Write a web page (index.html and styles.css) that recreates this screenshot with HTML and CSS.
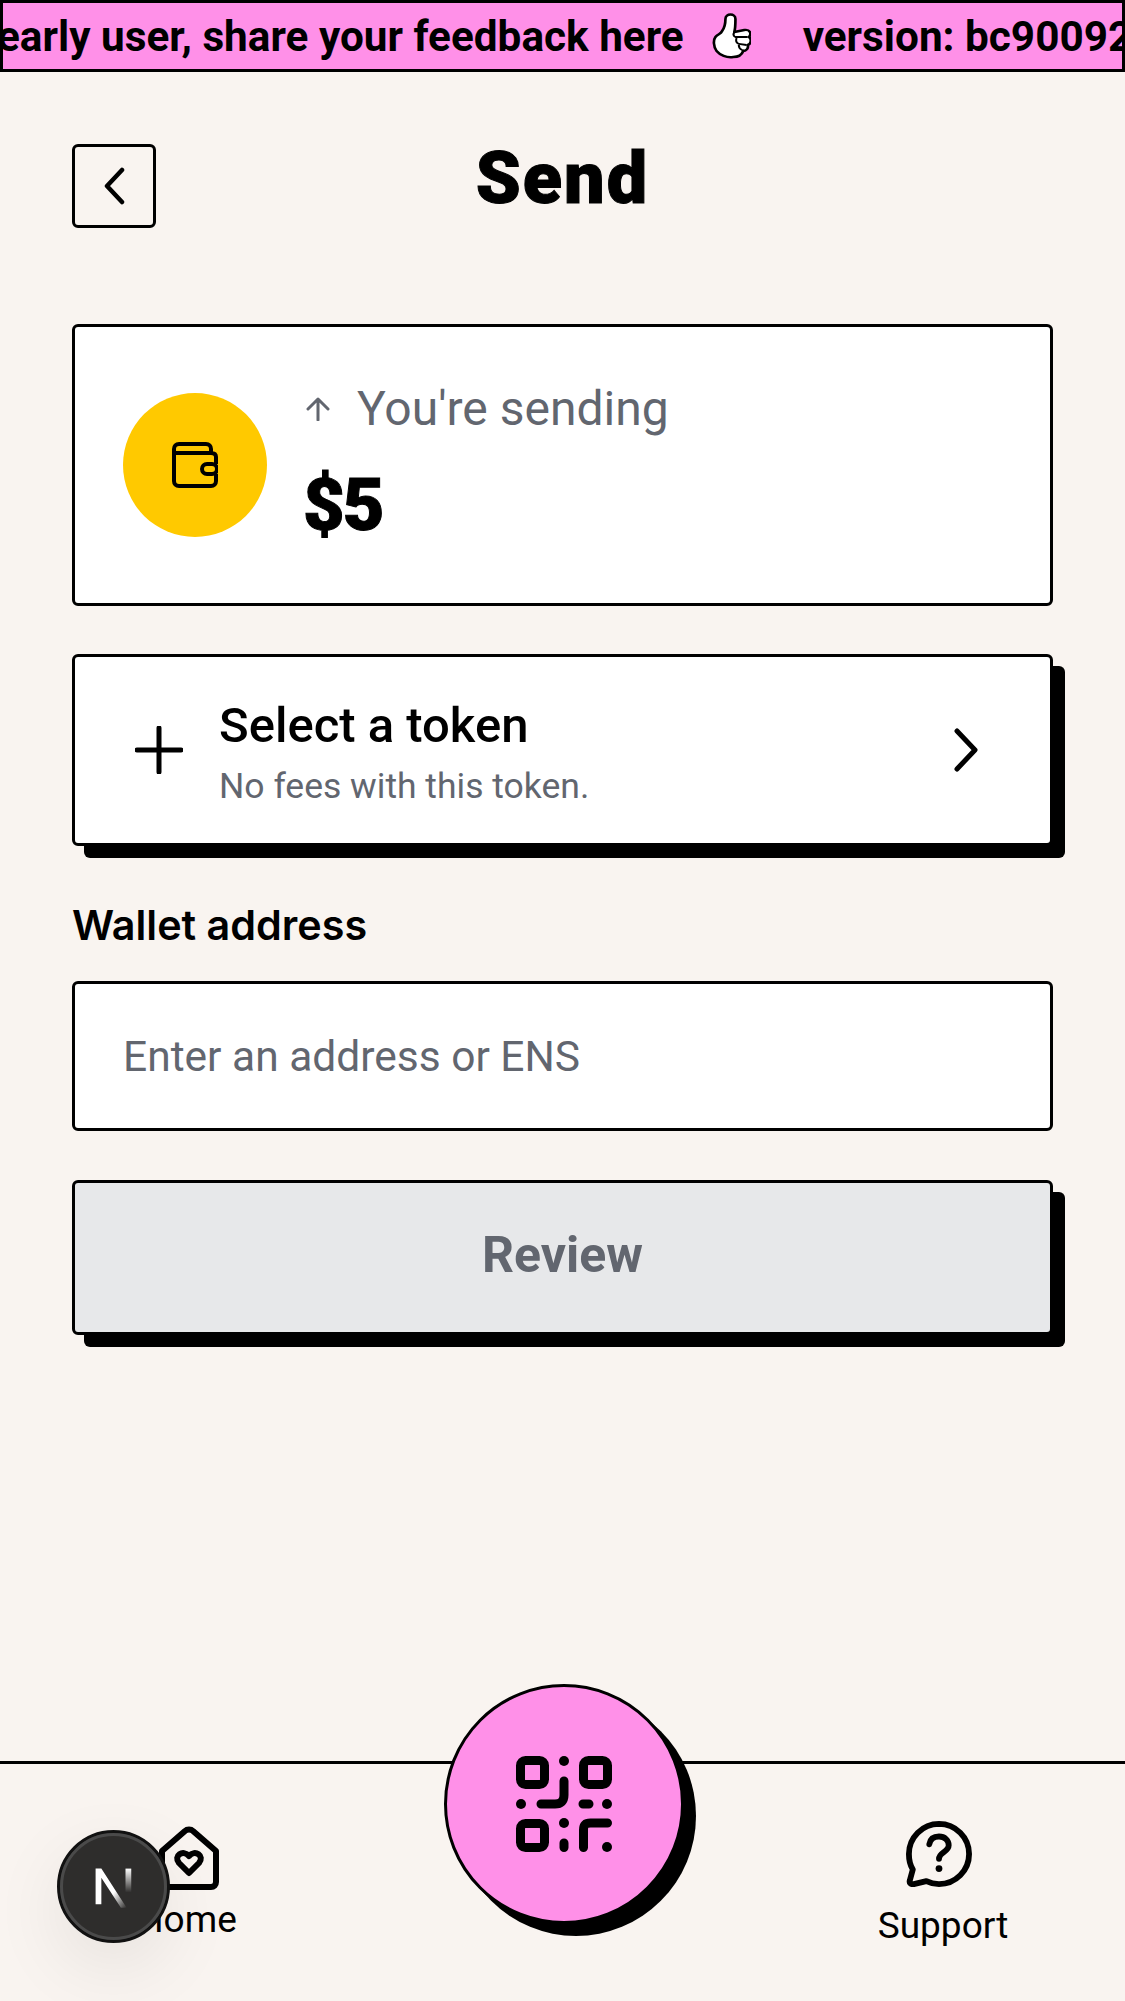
FILE: index.html
```html
<!DOCTYPE html>
<html>
  <head>
    <title>Send</title>
    <link rel="stylesheet" href="styles.css">
  </head>
  <body>
    <div class="banner">
      <div class="banner-track">
        <span>early user, share your feedback here</span>
        <svg class="thumb" viewBox="0 0 36 48" width="40" height="48" preserveAspectRatio="none">
          <path d="M13 7c0-6 9-6 9 0 0 4 0 9-1 13l9-2c5-1 7 4 4 7 3 2 2 7-1 8 1 3-1 6-4 6-1 3-4 6-9 6-6 1-12-2-15-6-3-5-3-11-1-14 2-3 5-3 6-6 2-3 3-8 3-12z" fill="#fff" stroke="#000" stroke-width="2.4" stroke-linejoin="round"/>
          <path d="M21 20c-1 2-1 4 1 5l11 0M23 26c-1 3 0 5 2 6l7 1M25 33c0 2 1 4 3 5l3 1" fill="none" stroke="#000" stroke-width="1.8"/>
        </svg>
        <span>version: bc90092</span>
      </div>
    </div>

    <main class="page">
      <header class="page-header">
        <a class="back-btn" href="#">
          <svg viewBox="0 0 24 38" width="24" height="38">
            <path d="M20 3 5 19l15 16" fill="none" stroke="#000" stroke-width="4.5" stroke-linecap="round" stroke-linejoin="round"/>
          </svg>
        </a>
        <h1 class="page-title">Send</h1>
      </header>

      <section class="amount-card">
        <div class="wallet-circle">
          <svg viewBox="0 0 46 46" width="46" height="46">
            <path d="M2 11V7c0-3 2-5 5-5h27c3 0 5 2 5 5v4M2 11h37c3 0 5 1 5 4v7M2 11v28c0 3 2 5 5 5h32c3 0 5-2 5-5v-7" fill="none" stroke="#000" stroke-width="4" stroke-linejoin="round"/>
            <rect x="30" y="22" width="15" height="10" rx="5" fill="#ffc900" stroke="#000" stroke-width="4"/>
          </svg>
        </div>
        <div class="amount-text">
          <div class="amount-label">
            <svg viewBox="0 0 24 24" width="24" height="24">
              <path d="M12 23V2M2 12 12 2l10 10" fill="none" stroke="#62666f" stroke-width="3" stroke-linecap="round" stroke-linejoin="round"/>
            </svg>
            <span>You're sending</span>
          </div>
          <div class="amount-value">$5</div>
        </div>
      </section>

      <a class="token-btn" href="#">
        <svg viewBox="0 0 48 48" width="48" height="48">
          <path d="M24 2v44M2 24h44" fill="none" stroke="#000" stroke-width="5" stroke-linecap="round"/>
        </svg>
        <div class="token-text">
          <div class="token-title">Select a token</div>
          <div class="token-sub">No fees with this token.</div>
        </div>
        <svg class="token-chevron" viewBox="0 0 24 44" width="24" height="44">
          <path d="M3 3l18 19L3 41" fill="none" stroke="#000" stroke-width="5" stroke-linecap="round" stroke-linejoin="round"/>
        </svg>
      </a>

      <label class="field-label" for="address">Wallet address</label>
      <input class="field-input" type="text" id="address" placeholder="Enter an address or ENS" />

      <button class="review-btn" type="button">Review</button>
    </main>

    <nav class="bottom-nav">
      <a class="nav-item nav-home" href="#">
        <svg viewBox="0 0 60 64" width="60" height="64">
          <path d="M3 25 26 5c2-2 6-2 8 0l23 20v31c0 3-2 5-5 5H8c-3 0-5-2-5-5z" fill="none" stroke="#000" stroke-width="6" stroke-linejoin="round"/>
          <path d="M30 47 20 37c-6-7 4-14 10-7 6-7 16 0 10 7z" fill="none" stroke="#000" stroke-width="6" stroke-linejoin="round"/>
        </svg>
        <span>Home</span>
      </a>
      <a class="nav-item nav-support" href="#">
        <svg viewBox="0 0 68 68" width="66" height="66">
          <path d="M34 3a31 31 0 0 1 0 62c-5 0-9-1-13-3L8 65c-3 .5-5-1-4-4l3-11C4 45 3 40 3 34 3 17 17 3 34 3z" fill="none" stroke="#000" stroke-width="6" stroke-linejoin="round"/>
          <path d="M24 24c1-6 5-8 10-8 6 0 10 4 10 9 0 7-10 7-10 14" fill="none" stroke="#000" stroke-width="6" stroke-linecap="round"/>
          <circle cx="34" cy="49" r="3.5"/>
        </svg>
        <span>Support</span>
      </a>
      <a class="qr-btn" href="#">
        <svg viewBox="0 0 96 96" width="96" height="96">
          <g fill="none" stroke="#000" stroke-width="9">
            <rect x="4.5" y="4.5" width="24" height="24" rx="5"/>
            <rect x="67.5" y="4.5" width="24" height="24" rx="5"/>
            <rect x="4.5" y="67.5" width="24" height="24" rx="5"/>
            <path d="M48 25v14c0 6-3 9-9 9H25M67 48h6M48 87v4.5M67.5 91.5V74c0-5 2-7 7-7h17" stroke-linecap="round"/>
          </g>
          <circle cx="48" cy="5" r="5"/>
          <circle cx="5" cy="48" r="5"/>
          <circle cx="91" cy="48" r="5"/>
          <circle cx="48" cy="67" r="5"/>
          <circle cx="91" cy="91" r="5"/>
        </svg>
      </a>
    </nav>

    <div class="next-badge">
      <svg viewBox="0 0 40 40" width="46" height="46">
        <defs>
          <linearGradient id="nfade1" x1="0" y1="0" x2="1" y2="1">
            <stop offset="0.6" stop-color="#fff"/>
            <stop offset="1" stop-color="#fff" stop-opacity="0"/>
          </linearGradient>
          <linearGradient id="nfade2" x1="0" y1="0" x2="0" y2="1">
            <stop offset="0" stop-color="#fff"/>
            <stop offset="0.8" stop-color="#fff" stop-opacity="0"/>
          </linearGradient>
        </defs>
        <path d="M4 4h5l22 34h-5L9 12v23H4z" fill="url(#nfade1)"/>
        <rect x="30" y="4" width="5" height="26" fill="url(#nfade2)"/>
      </svg>
    </div>
  </body>
</html>
```

FILE: styles.css
```css
* {
  box-sizing: border-box;
}

html,
body {
  height: 100%;
}

body {
  margin: 0;
  display: flex;
  flex-direction: column;
  background-color: #f9f4f0;
  color: #000;
  font-family: Roboto, "Liberation Sans", sans-serif;
  overflow: hidden;
}

a {
  color: inherit;
  text-decoration: none;
}

.banner {
  height: 72px;
  flex-shrink: 0;
  background-color: #ff90e8;
  border: 3px solid #000;
  overflow: hidden;
  display: flex;
  align-items: center;
}

.banner-track {
  display: flex;
  align-items: center;
  flex-shrink: 0;
  margin-left: -6px;
  font-size: 42.3px;
  font-weight: 700;
  white-space: nowrap;
}

.thumb {
  margin: 0 52px 0 27px;
}

.page {
  flex: 1;
  padding: 72px 72px 0;
  display: flex;
  flex-direction: column;
}

.page-header {
  position: relative;
  display: flex;
  justify-content: center;
  align-items: center;
  height: 84px;
  margin-bottom: 96px;
}

.back-btn {
  position: absolute;
  left: 0;
  top: 0;
  width: 84px;
  height: 84px;
  border: 3px solid #000;
  border-radius: 6px;
  display: flex;
  align-items: center;
  justify-content: center;
}

.page-title {
  margin: 0;
  font-size: 72px;
  font-weight: 900;
  line-height: 1;
  margin-top: -14px;
  letter-spacing: 2px;
  -webkit-text-stroke: 1px #000;
}

.amount-card {
  height: 282px;
  padding: 0 48px;
  background-color: #fff;
  border: 3px solid #000;
  border-radius: 6px;
  display: flex;
  align-items: center;
  gap: 36px;
  margin-bottom: 48px;
}

.wallet-circle {
  width: 144px;
  height: 144px;
  border-radius: 50%;
  background-color: #ffc900;
  display: flex;
  align-items: center;
  justify-content: center;
  flex-shrink: 0;
}

.amount-label {
  display: flex;
  align-items: center;
  gap: 27px;
  font-size: 48px;
  color: #62666f;
  line-height: 60px;
}

.amount-label svg {
  margin-left: 3px;
}

.amount-value {
  font-size: 72px;
  font-weight: 900;
  line-height: 96px;
  margin-top: 19px;
  margin-bottom: -3px;
  letter-spacing: -2px;
  -webkit-text-stroke: 1px #000;
}

.token-btn {
  height: 192px;
  padding: 0 72px 0 60px;
  background-color: #fff;
  border: 3px solid #000;
  border-radius: 6px;
  box-shadow: 12px 12px 0 #000;
  display: flex;
  align-items: center;
  gap: 36px;
  margin-bottom: 52px;
}

.token-text {
  flex: 1;
  padding-top: 6px;
}

.token-title {
  font-size: 49px;
  font-weight: 500;
  line-height: 60px;
  margin-bottom: 6px;
}

.token-sub {
  font-size: 35.5px;
  color: #62666f;
  line-height: 48px;
}

.field-label {
  font-family: Inter, Roboto, sans-serif;
  font-size: 41.3px;
  font-weight: 600;
  line-height: 54px;
  margin-bottom: 29px;
}

.field-input {
  height: 150px;
  padding: 0 48px;
  background-color: #fff;
  border: 3px solid #000;
  border-radius: 6px;
  font-family: inherit;
  font-size: 42.5px;
  margin-bottom: 49px;
}

.field-input::placeholder {
  color: #62666f;
  opacity: 1;
}

.review-btn {
  height: 155px;
  padding-bottom: 6px;
  background-color: #e7e8ea;
  border: 3px solid #000;
  border-radius: 6px;
  box-shadow: 12px 12px 0 #000;
  color: #62666f;
  font-family: inherit;
  font-size: 50px;
  font-weight: 700;
}

.bottom-nav {
  position: relative;
  height: 240px;
  flex-shrink: 0;
  border-top: 3px solid #000;
  padding: 57px 117px 0 122px;
  display: flex;
  justify-content: space-between;
  align-items: flex-start;
}

.nav-item {
  width: 130px;
  display: flex;
  flex-direction: column;
  align-items: center;
  font-size: 37px;
  line-height: 44px;
}

.nav-home {
  padding-top: 5px;
  gap: 8px;
}

.nav-home svg {
  margin-left: 4px;
}

.nav-support {
  gap: 17px;
}

.nav-support svg {
  margin-right: 8px;
}

.qr-btn {
  position: absolute;
  left: 444px;
  top: -80px;
  width: 240px;
  height: 240px;
  border: 3px solid #000;
  border-radius: 50%;
  background-color: #ff90e8;
  box-shadow: 12px 12px 0 #000;
  display: flex;
  align-items: center;
  justify-content: center;
}

.next-badge {
  position: absolute;
  left: 57px;
  top: 1830px;
  width: 113px;
  height: 113px;
  border-radius: 50%;
  background-color: #2e2d2c;
  border: 3px solid #111;
  outline: 3px solid #4a4a4a;
  outline-offset: -6px;
  box-shadow: 0 24px 72px rgba(0, 0, 0, 0.08);
  display: flex;
  align-items: center;
  justify-content: center;
}
```
